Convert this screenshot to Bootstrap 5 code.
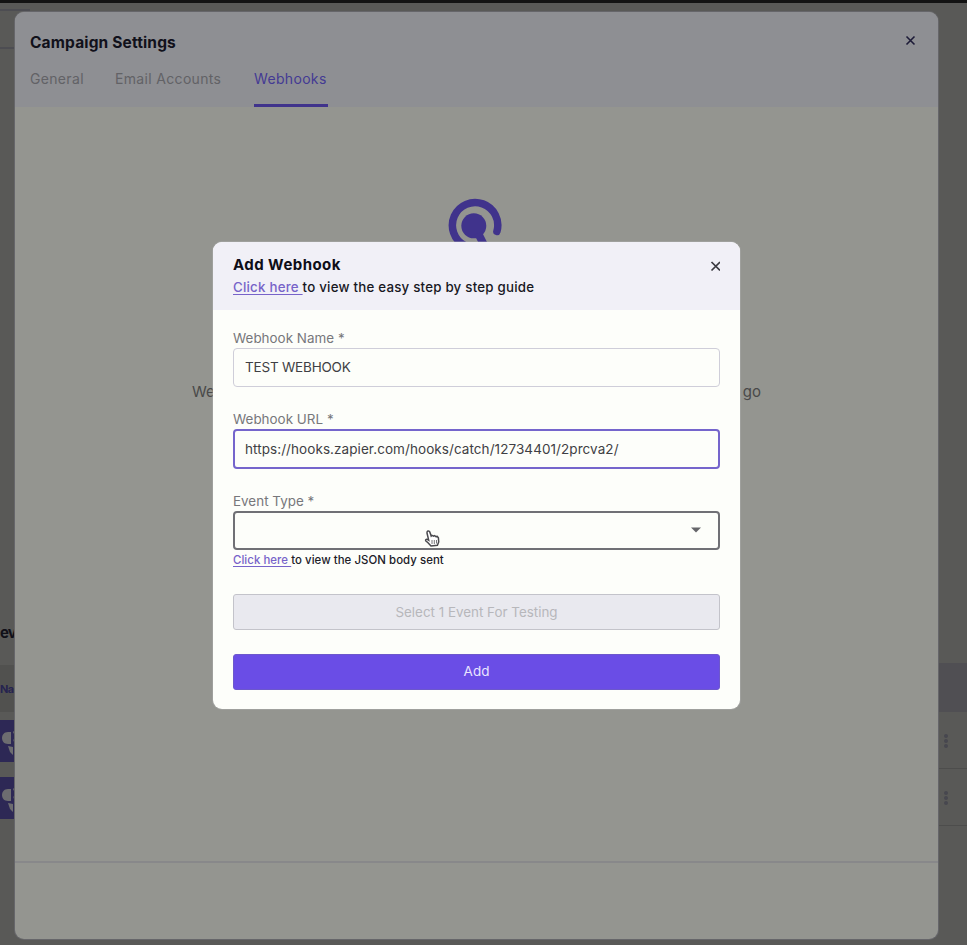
<!DOCTYPE html>
<html lang="en">
<head>
<meta charset="utf-8">
<meta name="viewport" content="width=device-width, initial-scale=1">
<title>Campaign Settings</title>
<link href="https://cdn.jsdelivr.net/npm/bootstrap@5.3.0/dist/css/bootstrap.min.css" rel="stylesheet">
<style>
body{font-family:Inter,"Open Sans",sans-serif;background:#595957;color:#111;height:945px;overflow:hidden}
.stage{width:967px;height:945px}
.page-back{border-top:3px solid #131313;height:945px}
.edge-left{width:30px;font-size:15px;line-height:20px}
.edge-right{width:30px}
.search-edge{height:40px;margin-top:6px;border-top:2px solid #4d4d52;border-bottom:2px solid #4d4d52}
.back-title{margin-top:574px;height:42px;color:#101018;letter-spacing:-.8px}
.back-head{height:47px;background:#51514f;color:#26234f;font-size:11px;padding-top:14px;letter-spacing:-.6px}
.tile{width:15px;height:42px;background:#2d2855}
.tile + .tile{margin-top:15px}
.tile-first{margin-top:8px}
.right-head{margin-top:660px;height:49px;background:#504f53}
.right-row{height:57px;border-bottom:1px solid #4d4d4c;padding:21px 0 0 4px}
.panel{left:15px;top:12px;width:923px;height:927px;border-radius:9px;background:#949590;overflow:hidden;box-shadow:0 0 0 1px #66666a}
.panel-head{height:95px;background:#8e8f93;padding:20px 15px 0}
.panel-title{font-size:15.5px;line-height:22px;letter-spacing:.15px;color:#11111b}
.tabs{gap:32px;margin-top:13px}
.tab-item{font-size:14px;line-height:20px;height:38px;color:#626266;padding:0;letter-spacing:.33px}
.tab-general{width:53px}.tab-mail{width:107px}
.tab-on{width:74px;color:#443a93;border-bottom:3px solid #40338c}
.close-btn{width:24px;height:24px;padding:0;line-height:0;border:0;background:none}
.empty{height:754px;padding-top:91px}
.empty-copy{margin-top:118px;padding:0 177px;font-size:15px;line-height:24px;color:#494949}
.panel-foot{border-top:2px solid #88888a;flex:1}
.dialog{left:213px;top:242px;width:527px;height:467px;border-radius:9px;background:#fdfefa;overflow:hidden;box-shadow:0 0 0 1px rgba(180,180,184,.35)}
.dialog-head{height:68px;background:#f1f0f7;padding:12px 20px 0}
.dialog-title{font-size:15px;line-height:22px;color:#0e0e18;letter-spacing:.45px}
.dialog-sub{font-size:13.3px;line-height:22px;color:#18181f;font-weight:500;letter-spacing:.22px}
.lnk,.lnk:hover{color:#7763c9;text-decoration:underline;white-space:pre;text-underline-offset:2px}
.dialog-body{padding:18.5px 20px 0}
.lab{font-size:13.4px;line-height:19px;color:#77777b;margin:0;display:block;letter-spacing:.03px}
.field{height:39.5px;border:1.5px solid #cfced9;border-radius:4px;padding:0 10px 0 11px;font-size:13.5px;color:#3f3f44;background:#fdfefa;margin-bottom:23px;width:487px}
.field-name{letter-spacing:-.2px}
.field-focus{border:2px solid #7565cc;padding-left:10px;letter-spacing:.07px}
.field-select{border:2px solid #707075;margin:0;padding-right:17px}
.hint{font-size:11.4px;line-height:20px;color:#202028;font-weight:500;letter-spacing:.06px}
.btn-test,.btn-test:disabled{height:36px;margin-top:24px;background:#e9e9ef;border:1px solid #c3c3ca;border-radius:3px;color:#b7b7bb;font-size:13.4px;padding:0;opacity:1}
.btn-add,.btn-add:hover{height:36px;margin-top:23.5px;background:#6a4de6;color:#e9e4ff;border:1px solid #6d58cc;border-radius:3px;font-size:13.5px;padding:0}
.pointer{left:424px;top:529px}
</style>
<script src="https://cdn.jsdelivr.net/npm/bootstrap@5.3.0/dist/js/bootstrap.bundle.min.js"></script>
</head>
<body>
<div class="stage position-relative overflow-hidden">
  <div class="page-back d-flex justify-content-between" aria-hidden="true">
    <div class="edge-left">
      <div class="search-edge"></div>
      <div class="back-title fw-bold">ev</div>
      <div class="back-head fw-bold">Na</div>
      <div class="tile tile-first"><svg class="d-block" width="15" height="42" fill="#6d6d70"><path d="M11 12v12H8c-4 0-6-3-6-6s2-6 6-6zM8 26l5 1v8l-3-3zM13 12l2-2v6zM13 19l2 2v4z"/></svg></div>
      <div class="tile"><svg class="d-block" width="15" height="42" fill="#6d6d70"><path d="M11 12v12H8c-4 0-6-3-6-6s2-6 6-6zM8 26l5 1v8l-3-3zM13 12l2-2v6zM13 19l2 2v4z"/></svg></div>
    </div>
    <div class="edge-right">
      <div class="right-head"></div>
      <div class="right-row"><svg class="d-block" width="10" height="18" fill="#47474f"><circle cx="5" cy="3" r="2"/><circle cx="5" cy="8" r="2"/><circle cx="5" cy="13" r="2"/></svg></div>
      <div class="right-row"><svg class="d-block" width="10" height="18" fill="#47474f"><circle cx="5" cy="3" r="2"/><circle cx="5" cy="8" r="2"/><circle cx="5" cy="13" r="2"/></svg></div>
    </div>
  </div>

  <section class="panel position-absolute d-flex flex-column">
    <header class="panel-head">
      <div class="d-flex justify-content-between">
        <div class="panel-title fw-bold">Campaign Settings</div>
        <button class="close-btn" aria-label="Close settings"><svg width="24" height="24" viewBox="0 0 24 24" stroke="#1d1b38" stroke-width="1.6" fill="none"><path d="M7.500 4.500l8 8M15.500 4.500l-8 8"/></svg></button>
      </div>
      <nav class="tabs d-flex">
        <a class="tab-item tab-general text-decoration-none text-nowrap">General</a>
        <a class="tab-item tab-mail text-decoration-none text-nowrap">Email Accounts</a>
        <a class="tab-item tab-on text-decoration-none text-nowrap">Webhooks</a>
      </nav>
    </header>
    <div class="empty">
      <svg class="d-block mx-auto" width="60" height="64" viewBox="0 0 60 64" fill="none"><path d="M17.500 47.300A22.700 22.700 0 1 1 49.900 33.500" stroke="#40338c" stroke-width="7.500" stroke-linecap="round"/><circle cx="26.800" cy="27.800" r="12.500" fill="#40338c"/><path d="M31 35l6 12" stroke="#40338c" stroke-width="8"/></svg>
      <div class="empty-copy d-flex justify-content-between"><span>We</span><span>go</span></div>
    </div>
    <footer class="panel-foot"></footer>
  </section>

  <section class="dialog position-absolute">
    <header class="dialog-head d-flex justify-content-between">
      <div>
        <div class="dialog-title fw-bold"><span>Add Webhook</span></div>
        <div class="dialog-sub"><a class="lnk">Click here </a><span>to view the easy step by step guide</span></div>
      </div>
      <button class="close-btn" aria-label="Close dialog"><svg width="24" height="24" viewBox="0 0 24 24" stroke="#3a3a40" stroke-width="1.7" fill="none"><path d="M15.500 8l8.500 8.500M24 8l-8.500 8.500"/></svg></button>
    </header>
    <form class="dialog-body">
      <label class="lab">Webhook Name *</label>
      <div class="field field-name d-flex align-items-center">TEST WEBHOOK</div>
      <label class="lab">Webhook URL *</label>
      <div class="field field-focus d-flex align-items-center">https://hooks.zapier.com/hooks/catch/12734401/2prcva2/</div>
      <label class="lab">Event Type *</label>
      <div class="field field-select d-flex align-items-center justify-content-end"><svg width="10" height="6"><path d="M0 .5h10L5 5.500z" fill="#66666a"/></svg></div>
      <div class="hint"><a class="lnk">Click here </a><span>to view the JSON body sent</span></div>
      <button type="button" class="btn btn-test w-100 d-block" disabled>Select 1 Event For Testing</button>
      <button type="button" class="btn btn-add w-100 d-block">Add</button>
    </form>
  </section>

  <svg class="pointer position-absolute" width="17" height="19" viewBox="0 0 17 19"><path d="M3.500 2.200c1-.7 2 0 2.300.9l1.400 4 .8-.8 1.500.8 1-.5 1.500 1 1.200-.2 1.200 1.400.3 4.200-1.300 3.200-6.400.8-3-3.300-2.300-2c-.5-1 .5-1.700 1.500-1.300l1.500.8-1.700-7.200c-.1-.8 0-1.300.5-1.800z" fill="#fff" stroke="#4a4a4e" stroke-width="1.500"/><path d="M8 11v4M10.300 11v4M12.500 11v3.500" stroke="#77777a"/></svg>
</div>
</body>
</html>
